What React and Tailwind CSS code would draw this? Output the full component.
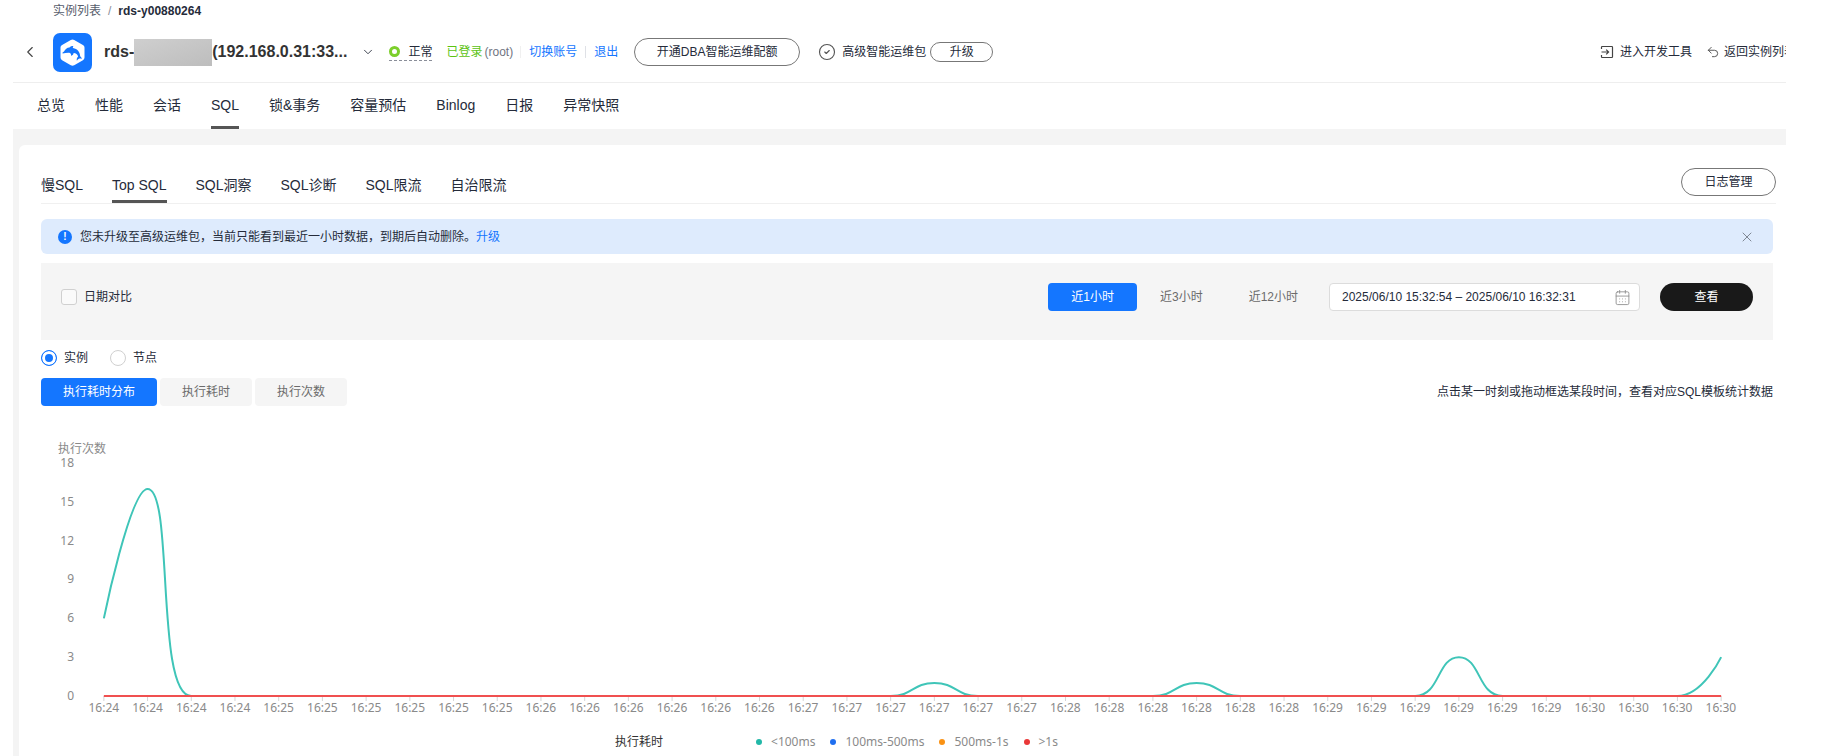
import { CalendarDays, ChevronDown, ChevronLeft, CircleCheck, Undo2, X } from 'lucide-react';

const mainTabs = ['总览', '性能', '会话', 'SQL', '锁&事务', '容量预估', 'Binlog', '日报', '异常快照'];
const sqlTabs = ['慢SQL', 'Top SQL', 'SQL洞察', 'SQL诊断', 'SQL限流', '自治限流'];
const ranges = ['近1小时', '近3小时', '近12小时'];
const chartModes = ['执行耗时分布', '执行耗时', '执行次数'];

const legend = [
  { label: '<100ms', dot: 'bg-[#22b8a8]' },
  { label: '100ms-500ms', dot: 'bg-[#1f6ff0]' },
  { label: '500ms-1s', dot: 'bg-[#fa9214]' },
  { label: '>1s', dot: 'bg-[#ea3838]' },
];

const yLabels = [18, 15, 12, 9, 6, 3, 0];

// one sample every ten seconds, 16:24 to 16:30
const xLabels = [
  ...Array(4).fill('16:24'),
  ...Array(6).fill('16:25'),
  ...Array(6).fill('16:26'),
  ...Array(6).fill('16:27'),
  ...Array(6).fill('16:28'),
  ...Array(6).fill('16:29'),
  ...Array(4).fill('16:30'),
];
const peaks = { 0: 6, 1: 16, 19: 1, 25: 1, 31: 3, 37: 3 };

const CHART_W = 1660;
const PLOT_H = 233;
const STEP = CHART_W / xLabels.length;
const points = xLabels.map((_, i) => [(i + 0.5) * STEP, 1 + PLOT_H - ((peaks[i] || 0) / 18) * PLOT_H]);

const between = (v, a, b) => Math.min(Math.max(v, Math.min(a, b)), Math.max(a, b));

// smoothed line, control points never leave the range of their neighbours
function smoothPath(pts) {
  let d = `M${pts[0][0]} ${pts[0][1]}`;
  let [cx, cy] = pts[0];
  for (let i = 1; i < pts.length; i++) {
    const [px, py] = pts[i - 1];
    const [x, y] = pts[i];
    if (i === pts.length - 1) {
      d += `C${cx} ${cy} ${x} ${y} ${x} ${y}`;
      break;
    }
    const [nx, ny] = pts[i + 1];
    const lenPrev = Math.hypot(x - px, y - py);
    const lenNext = Math.hypot(nx - x, ny - y);
    const k = (0.5 * lenNext) / (lenNext + lenPrev);
    const outX = between(x + (nx - px) * k, x, nx);
    const outY = between(y + (ny - py) * k, y, ny);
    const inX = between(x - ((outX - x) * lenPrev) / lenNext, px, x);
    const inY = between(y - ((outY - y) * lenPrev) / lenNext, py, y);
    d += `C${cx} ${cy} ${inX} ${inY} ${x} ${y}`;
    cx = x + ((x - inX) * lenNext) / lenPrev;
    cy = y + ((y - inY) * lenNext) / lenPrev;
  }
  return d;
}

function Logo() {
  return (
    <svg viewBox="0 0 39 39" className="ml-3.5 h-[39px] w-[39px] shrink-0" aria-hidden="true">
      <rect width="39" height="39" rx="7" fill="#1476ff" />
      <path
        d="M17.8 6.9a3.4 3.4 0 0 1 3.4 0l8.700 5a3 3 0 0 1 1.600 2.700v10a3 3 0 0 1-1.600 2.700l-8.700 5a3.400 3.400 0 0 1-3.400 0l-8.700-5a3 3 0 0 1-1.600-2.700v-10a3 3 0 0 1 1.600-2.700z"
        fill="#fff"
      />
      <path
        d="M9.600 20.600c-.3-1 .5-1.400 1.400-2 1.200-2.600 3-4 5.500-4.200.9-.9 2.300-1.500 4-1.300-.7.700-.8 1.200-.5 1.900 4.400.9 6.900 3.900 7.200 8.200.8.700 1.500 1.600 1.900 2.700-1.200-.5-2.200-.6-3.200-.2-.8.400-1.500 1.100-2 2-.5-1.700 0-3.200 1.200-4.300-.6-2-2.100-3.200-4.500-3.400-.1 1.300-.9 2.300-2.300 2.900-.1-1.400-.5-2.300-1.300-3-2.500-.3-4.900.1-7.400.7z"
        fill="#1476ff"
      />
    </svg>
  );
}

function Header() {
  return (
    <header className="overflow-hidden border-b border-[#eeeeee] pb-px">
      <div className="flex gap-[7px] pl-10 leading-[23px]">
        <a href="#" className="text-[#575d6c]">实例列表</a>
        <span className="text-[#8a8e99]">/</span>
        <span className="font-bold">rds-y00880264</span>
      </div>
      <div className="-mr-2.5 flex h-[58px] items-center whitespace-nowrap pl-2">
        <button type="button" aria-label="返回">
          <ChevronLeft size={18} strokeWidth={1.5} className="text-[#444]" />
        </button>
        <Logo />
        <h1 className="ml-3 flex items-center text-base font-bold text-[#333]">
          rds-
          <span className="h-[27px] w-[78px] bg-linear-to-br from-[#cfcfcf] to-[#bdbdbd]" />
          (192.168.0.31:33...
        </h1>
        <button type="button" aria-label="选择实例" className="ml-3.5">
          <ChevronDown size={14} strokeWidth={1.5} />
        </button>
        <span className="ml-3.5 flex items-center gap-2 border-b border-dashed border-[#8a8e99] leading-4">
          <span className="h-[11px] w-[11px] rounded-full border-[3px] border-[#7ccf2b]" />
          正常
        </span>
        <span className="ml-3.5 text-[#5cc313]">已登录</span>
        <span className="ml-0.5 text-[#71757f]">(root)</span>
        <span className="ml-[7px] h-3 w-px bg-[#f0f0f0]" />
        <a href="#" className="ml-2 text-[#1476ff]">切换账号</a>
        <span className="ml-2 h-3 w-px bg-[#dfe1e6]" />
        <a href="#" className="ml-2 text-[#1476ff]">退出</a>
        <button type="button" className="ml-4 h-7 w-[166px] rounded-full border border-[#777]">
          开通DBA智能运维配额
        </button>
        <CircleCheck size={18} strokeWidth={1.5} className="ml-[18px] text-[#555]" />
        <span className="ml-1.5">高级智能运维包</span>
        <button type="button" className="ml-1 h-5 w-[63px] rounded-full border border-[#777] leading-4">
          升级
        </button>
        <div className="ml-auto flex items-center gap-3.5">
          <a href="#" className="flex items-center gap-1.5">
            <svg viewBox="0 0 14 14" className="h-3.5 w-3.5" fill="none" stroke="#444" strokeWidth="1.2">
              <path d="M1.500 4V2.200q0-.7.7-.7h9.600q.7 0 .7.7v9.600q0 .7-.7.7H2.200q-.7 0-.7-.7V10M1.500 7h7M6.200 4.600 8.600 7 6.200 9.400" />
            </svg>
            进入开发工具
          </a>
          <a href="#" className="flex items-center gap-1">
            <Undo2 size={14} strokeWidth={1.5} className="text-[#444]" />
            返回实例列表
          </a>
        </div>
      </div>
    </header>
  );
}

function Tabs({ items, active, className, itemClassName }) {
  return (
    <nav className={`flex text-sm leading-[22px] ${className}`}>
      {items.map((item) => (
        <a
          key={item}
          href="#"
          className={`border-b-3 ${itemClassName} ${item === active ? 'border-[#555]' : 'border-transparent'}`}
        >
          {item}
        </a>
      ))}
    </nav>
  );
}

function FilterBar() {
  return (
    <div className="mt-[9px] flex h-[77px] items-start justify-between bg-[#f5f5f5] px-5 pt-5">
      <label className="flex h-7 items-center gap-[7px]">
        <input
          type="checkbox"
          className="h-4 w-4 appearance-none rounded-[3px] border border-[#d0d0d0] bg-[#fafafa] checked:bg-[#1476ff]"
        />
        日期对比
      </label>
      <div className="flex items-center">
        {ranges.map((range, i) => (
          <button
            key={range}
            type="button"
            className={`h-7 rounded px-[23px] ${i === 0 ? 'bg-[#1476ff] text-white' : 'text-[#6b6b6b]'}`}
          >
            {range}
          </button>
        ))}
        <label className="ml-2 flex h-7 w-[311px] items-center rounded border border-[#dcdcdc] bg-white pl-3 pr-2">
          <input
            type="text"
            readOnly
            aria-label="时间范围"
            value="2025/06/10 15:32:54 – 2025/06/10 16:32:31"
            className="min-w-0 flex-1 outline-none"
          />
          <CalendarDays size={17} strokeWidth={1.2} className="text-[#8a8a8a]" />
        </label>
        <button type="button" className="ml-5 h-7 w-[93px] rounded-full bg-[#191919] text-white">
          查看
        </button>
      </div>
    </div>
  );
}

function ScopeRadio({ label, defaultChecked }) {
  return (
    <label className="flex items-center gap-[7px]">
      <input
        type="radio"
        name="scope"
        defaultChecked={defaultChecked}
        className="h-4 w-4 appearance-none rounded-full border border-[#d0d0d0] checked:border-[#1476ff] checked:bg-[#1476ff] checked:shadow-[inset_0_0_0_3px_white]"
      />
      {label}
    </label>
  );
}

function Chart() {
  return (
    <section className="mt-[35px] font-['Noto_Sans','Noto_Sans_CJK_SC',sans-serif] leading-4 text-[#8a8a8a]">
      <h2 className="pl-[17px]">执行次数</h2>
      <div className="-mt-0.5 flex pr-[30px]">
        <div className="flex h-[249px] w-[33px] flex-col justify-between text-right">
          {yLabels.map((label) => (
            <span key={label}>{label}</span>
          ))}
        </div>
        <div className="ml-2 min-w-0 flex-1 pt-[7px]">
          <svg
            viewBox={`0 0 ${CHART_W} 240`}
            preserveAspectRatio="none"
            className="h-[240px] w-full"
            fill="none"
            role="img"
            aria-label="执行耗时分布"
          >
            {points.map(([x]) => (
              <path key={x} d={`M${x} 234V239`} stroke="#d5d5d5" />
            ))}
            <path d={smoothPath(points)} stroke="#3fc5b8" strokeWidth="2" />
            <path d={`M${STEP / 2} 234H${CHART_W - STEP / 2}`} stroke="#f05050" strokeWidth="2" />
          </svg>
          <div className="-mt-0.5 flex">
            {xLabels.map((label, i) => (
              <span key={i} className="min-w-0 flex-1 text-center">{label}</span>
            ))}
          </div>
        </div>
      </div>
      <div className="mt-[18px] grid grid-cols-[1fr_auto_1fr]">
        <span className="mr-[93px] justify-self-end text-[#333]">执行耗时</span>
        <ul className="flex gap-[15px]">
          {legend.map((item) => (
            <li key={item.label} className="flex items-center gap-[9px]">
              <span className={`h-1.5 w-1.5 rounded-full ${item.dot}`} />
              {item.label}
            </li>
          ))}
        </ul>
      </div>
    </section>
  );
}

export default function App() {
  return (
    <div className="min-h-screen bg-white pl-[13px] pr-10 font-['Liberation_Sans','Noto_Sans_CJK_SC',sans-serif] text-xs text-[#252b3a]">
      <div className="flex min-h-screen flex-col">
        <Header />
        <Tabs items={mainTabs} active="SQL" className="gap-[30px] pl-6 pt-[11px]" itemClassName="pb-2.5" />
        <div className="flex flex-1 flex-col bg-[#f4f4f4] pl-1.5 pt-4">
          <main className="flex-1 rounded-tl-md bg-white pt-[23px]">
            <div className="pl-[22px] pr-2.5">
              <div className="flex items-start justify-between border-b border-[#f0f0f0]">
                <Tabs items={sqlTabs} active="Top SQL" className="gap-[29px] pt-1.5" itemClassName="pb-1" />
                <button type="button" className="h-7 w-[95px] rounded-full border border-[#777]">
                  日志管理
                </button>
              </div>
            </div>
            <div className="pl-[22px] pr-[13px] pt-[15px]">
              <div className="flex h-[35px] items-center rounded-md bg-[#deebfd] pl-[17px] pr-[18px]">
                <span className="flex h-3.5 w-3.5 items-center justify-center rounded-full bg-[#1476ff] text-[10px] font-bold text-white">
                  !
                </span>
                <p className="ml-2">
                  您未升级至高级运维包，当前只能看到最近一小时数据，到期后自动删除。
                  <a href="#" className="text-[#1476ff]">升级</a>
                </p>
                <button type="button" aria-label="关闭" className="ml-auto">
                  <X size={16} strokeWidth={1.5} className="text-[#7f8794]" />
                </button>
              </div>
              <FilterBar />
              <div className="mt-[7px] flex h-[22px] items-center gap-[22px]">
                <ScopeRadio label="实例" defaultChecked />
                <ScopeRadio label="节点" />
              </div>
              <div className="mt-[9px] flex items-center gap-[3px]">
                {chartModes.map((mode, i) => (
                  <button
                    key={mode}
                    type="button"
                    className={`h-7 rounded px-[22px] ${i === 0 ? 'bg-[#1476ff] text-white' : 'bg-[#f5f5f5] text-[#6b6b6b]'}`}
                  >
                    {mode}
                  </button>
                ))}
                <p className="ml-auto">点击某一时刻或拖动框选某段时间，查看对应SQL模板统计数据</p>
              </div>
              <Chart />
            </div>
          </main>
        </div>
      </div>
    </div>
  );
}
